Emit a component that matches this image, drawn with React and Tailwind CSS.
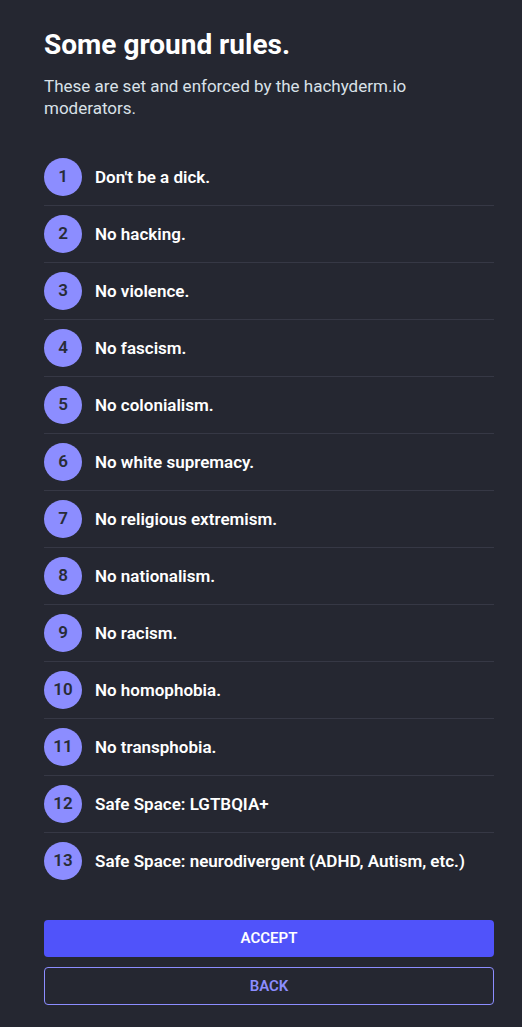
const rules = [
  "Don't be a dick.",
  'No hacking.',
  'No violence.',
  'No fascism.',
  'No colonialism.',
  'No white supremacy.',
  'No religious extremism.',
  'No nationalism.',
  'No racism.',
  'No homophobia.',
  'No transphobia.',
  'Safe Space: LGTBQIA+',
  'Safe Space: neurodivergent (ADHD, Autism, etc.)',
];

export default function App() {
  return (
    <div className="min-h-[1027px] bg-[#252731] pl-[44px] pr-[28px] pt-[28px] pb-[22px] font-['Roboto',sans-serif] text-white">
      <h1 className="text-[28px] leading-[34px] font-bold">Some ground rules.</h1>
      <p className="mt-[13px] text-[17px] leading-[22px] text-[#d9e1e8]">
        These are set and enforced by the hachyderm.io moderators.
      </p>

      {/* Rules */}
      <ol className="mt-[30px]">
        {rules.map((rule, i) => (
          <li
            key={i}
            className="flex items-center gap-[13px] py-[9px] border-b border-[#363845] last:border-b-0"
          >
            <span className="flex h-[38px] w-[38px] flex-shrink-0 items-center justify-center rounded-full bg-[#8c8dff] text-[17px] font-semibold text-[#282c37]">
              {i + 1}
            </span>
            <span className="text-[17px] leading-[20px] font-semibold">{rule}</span>
          </li>
        ))}
      </ol>

      {/* Actions */}
      <div className="mt-[31px] flex flex-col gap-[10px]">
        <button className="h-[37px] w-full rounded-[4px] bg-[#5053fa] text-[15px] font-semibold text-white">
          ACCEPT
        </button>
        <button className="h-[38px] w-full rounded-[4px] border border-[#8c8dff] text-[15px] font-semibold text-[#8c8dff]">
          BACK
        </button>
      </div>
    </div>
  );
}
